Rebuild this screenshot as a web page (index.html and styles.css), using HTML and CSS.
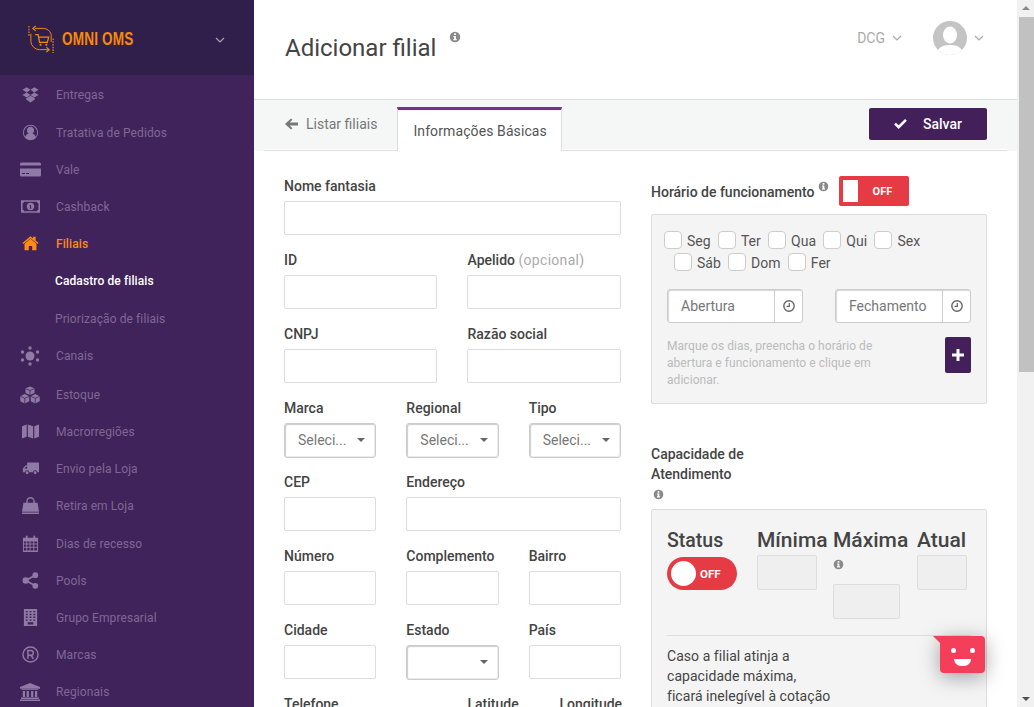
FILE: index.html
```html
<!DOCTYPE html>
<html lang="en">
<head>
    <meta charset="UTF-8">
    <meta name="viewport" content="width=device-width, initial-scale=1.0">
    <title>Adicionar filial</title>
    <link rel="stylesheet" href="styles.css">
</head>
<body>
    <svg class="sprite" aria-hidden="true">
        <symbol id="i-info" viewBox="0 0 16 16"><path fill-rule="evenodd" d="M8 1a7 7 0 1 1 0 14A7 7 0 0 1 8 1zM6.800 3v2.300h2.400V3zM5.800 6.500v1.400h1v2.800h-1v1.500h4.400v-1.500h-1V6.500z"/></symbol>
        <symbol id="i-chev" viewBox="0 0 10 6"><path d="M1 1l4 4 4-4" fill="none" stroke="currentColor" stroke-width="1.200"/></symbol>
        <symbol id="i-clock" viewBox="0 0 14 14"><circle cx="7" cy="7" r="5.200" fill="none" stroke="currentColor" stroke-width="1.400"/><path d="M7.300 4v3.400H4.600" fill="none" stroke="currentColor" stroke-width="1.200"/></symbol>
    </svg>

    <div class="app">
        <!-- Sidebar -->
        <nav class="sidebar">
            <div class="brand">
                <svg class="brand-logo" viewBox="0 0 28 30" fill="none" stroke="#f58a07">
                    <path d="M1 1v11M26 14v15" stroke-dasharray="1.600 1.200" stroke-width="1.200"/>
                    <path d="M7 3.500h9a9 9 0 0 1 8 6v8" stroke-width="1"/>
                    <path d="M3 9v8a9 9 0 0 0 9 8.500h9" stroke-width="1"/>
                    <path d="M8 1L5 3.500 8 6M19 23l3 2.500-3 2.500" stroke-width="1.200"/>
                    <path d="M7.500 10h3l1.500 8h8l1.500-5.500H11" stroke-width="1.300"/>
                    <circle cx="13" cy="20.500" r="1.100" fill="#f58a07" stroke="none"/>
                    <circle cx="19" cy="20.500" r="1.100" fill="#f58a07" stroke="none"/>
                </svg>
                <span class="brand-name">OMNI OMS</span>
                <svg class="brand-chev"><use href="#i-chev"/></svg>
            </div>
            <ul class="menu">
                <li class="menu-item">
                    <svg class="menu-icon" viewBox="0 0 20 20"><path d="M5.500 1.500L10 4.500 5.500 7.500 .5 4.500zM14.500 1.500l5 3-5 3L10 4.500zM5.500 7.500L10 10.500l-4.500 3-5-3zM14.500 7.500l5 3-5 3L10 10.500zM5 14.500l5-3 5 3v1.500l-5 3.500-5-3.500z"/></svg>
                    Entregas
                </li>
                <li class="menu-item">
                    <svg class="menu-icon" viewBox="0 0 20 20"><path fill-rule="evenodd" d="M10 1a9 9 0 1 1 0 18 9 9 0 0 1 0-18zm0 1.200a7.800 7.800 0 0 0-6 12.700c.7-2.200 2.200-3.500 3.800-3.800a4.200 4.200 0 1 1 4.400 0c1.600.3 3.100 1.600 3.800 3.800A7.800 7.800 0 0 0 10 2.200z"/></svg>
                    Tratativa de Pedidos
                </li>
                <li class="menu-item">
                    <svg class="menu-icon menu-icon--wide" viewBox="0 0 21 14"><path d="M0 1.500A1.500 1.500 0 0 1 1.500 0h18A1.500 1.500 0 0 1 21 1.500V3H0zM0 6h21v6.500a1.500 1.500 0 0 1-1.500 1.500h-18A1.500 1.500 0 0 1 0 12.500zM2 10.500v1h3v-1zm4 0v1h3v-1z" fill-rule="evenodd"/></svg>
                    Vale
                </li>
                <li class="menu-item">
                    <svg class="menu-icon menu-icon--cash" viewBox="0 0 18 12"><path fill-rule="evenodd" d="M0 0h18v12H0zM3 1.500A2 2 0 0 1 1.500 3v6A2 2 0 0 1 3 10.500h12A2 2 0 0 1 16.500 9V3A2 2 0 0 1 15 1.500zM9 2.500a3.500 3.500 0 1 1 0 7 3.500 3.500 0 0 1 0-7zM8 4.500v.7h.6v2H8v.8h2.100v-.8h-.6V4.500z"/></svg>
                    Cashback
                </li>
                <li class="menu-item menu-item--active">
                    <svg class="menu-icon" viewBox="0 0 20 18"><path d="M10 3.500l7 5.800V16a1 1 0 0 1-1 1h-4v-5H8v5H4a1 1 0 0 1-1-1V9.300zM10 .5l3 2.500V1h3v4.500l3.500 3-1 1.200L10 2.700 1.500 9.700l-1-1.200z"/></svg>
                    Filiais
                </li>
                <li class="menu-item menu-item--sub menu-item--current">Cadastro de filiais</li>
                <li class="menu-item menu-item--sub">Priorização de filiais</li>
                <li class="menu-item">
                    <svg class="menu-icon menu-icon--lg" viewBox="0 0 20 20"><circle cx="10" cy="10" r="4.500"/><circle cx="10" cy="2" r="1.700"/><circle cx="10" cy="18" r="1.700"/><circle cx="2.500" cy="6" r="1.700"/><circle cx="17.500" cy="6" r="1.700"/><circle cx="2.500" cy="14" r="1.700"/><circle cx="17.500" cy="14" r="1.700"/></svg>
                    Canais
                </li>
                <li class="menu-item menu-item--gap">
                    <svg class="menu-icon menu-icon--lg" viewBox="0 0 21 18"><path d="M10.500 0l4.700 2v5L10.500 9 5.800 7V2zM5 8l4.700 2.200v5.300L5 18 .3 15.500v-5.300zM16 8l4.700 2.200v5.300L16 18l-4.700-2.500v-5.300z"/><path d="M6 2.300l4.500 2 4.500-2M10.500 4.300V9M.6 10.500l4.400 2 4.400-2M5 12.500V18M11.600 10.500l4.400 2 4.400-2M16 12.500V18" fill="none" stroke="#40235a" stroke-width=".8"/></svg>
                    Estoque
                </li>
                <li class="menu-item">
                    <svg class="menu-icon" viewBox="0 0 18 18"><path d="M0 3.500L5 1.500v13L0 16.500zM6.200 1.500l5.600 2v13l-5.600-2zM13 3.500l5-2v13l-5 2z"/></svg>
                    Macrorregiões
                </li>
                <li class="menu-item">
                    <svg class="menu-icon" viewBox="0 0 20 16"><path fill-rule="evenodd" d="M6 1h13a1 1 0 0 1 1 1v10.500h-2a2.500 2.500 0 0 0-5 0H8.500a2.500 2.500 0 0 0-5 0H1V8l3-3.500h2zM2.800 8H6V5.800H4.700z"/><circle cx="6" cy="13" r="1.700"/><circle cx="15.500" cy="13" r="1.700"/></svg>
                    Envio pela Loja
                </li>
                <li class="menu-item">
                    <svg class="menu-icon" viewBox="0 0 18 18"><path fill-rule="evenodd" d="M1.500 6h3V4.500a4.500 4.500 0 0 1 9 0V6h3L18 15.500H0zM6 6h6V4.500a3 3 0 0 0-6 0zM0 16.300h18V18H0z"/></svg>
                    Retira em Loja
                </li>
                <li class="menu-item">
                    <svg class="menu-icon" viewBox="0 0 16 18"><path fill-rule="evenodd" d="M0 3h3V1.500a1 1 0 0 1 2 0V3h6V1.500a1 1 0 0 1 2 0V3h3v15H0zM1 7v2h2.500V7zm3.500 0v2H7V7zM8 7v2h3V7zm4 0v2h3V7zM1 10v2.500h2.500V10zm3.500 0v2.500H7V10zM8 10v2.500h3V10zm4 0v2.500h3V10zM1 13.500V16.500h2.500v-3zm3.500 0v3H7v-3zm3.500 0v3h3v-3zm4 0v3h3v-3z"/></svg>
                    Dias de recesso
                </li>
                <li class="menu-item">
                    <svg class="menu-icon" viewBox="0 0 16 16"><circle cx="3.500" cy="8" r="3"/><circle cx="12.500" cy="3" r="2.700"/><circle cx="12.500" cy="13" r="2.700"/><path d="M3.500 8l9-5M3.500 8l9 5" stroke="#8e7aa5" stroke-width="1.500"/></svg>
                    Pools
                </li>
                <li class="menu-item">
                    <svg class="menu-icon" viewBox="0 0 14 18"><path fill-rule="evenodd" d="M0 0h14v18H0zM2 2v1.500h2V2zm4 0v1.500h2V2zm4 0v1.500h2V2zM2 5v1.500h2V5zm4 0v1.500h2V5zm4 0v1.500h2V5zM2 8v1.500h2V8zm4 0v1.500h2V8zm4 0v1.500h2V8zM2 11v1.500h2V11zm4 0v1.500h2V11zm4 0v1.500h2V11zM4 14v2.500h6V14z"/></svg>
                    Grupo Empresarial
                </li>
                <li class="menu-item">
                    <svg class="menu-icon" viewBox="0 0 18 18">
                        <circle cx="9" cy="9" r="8" fill="none" stroke="#8e7aa5" stroke-width="1.500"/>
                        <path d="M6.300 13.500V4.800h3.200a2.500 2.500 0 0 1 0 5H6.300M9.500 9.800l2.500 3.700" fill="none" stroke="#8e7aa5" stroke-width="1.600"/>
                    </svg>
                    Marcas
                </li>
                <li class="menu-item">
                    <svg class="menu-icon menu-icon--lg" viewBox="0 0 18 16"><path d="M9 0l9 3.500v1.500H0V3.500zM1.500 5.500h15v.8h-15zM2.500 7h2v5.500h-2zM6 7h2v5.500H6zM10 7h2v5.500h-2zM13.500 7h2v5.500h-2zM1 13h16v1.200H1zM0 14.700h18V16H0z"/></svg>
                    Regionais
                </li>
            </ul>
        </nav>

        <!-- Main -->
        <main class="main">
            <header class="topbar">
                <h1 class="page-title">Adicionar filial</h1>
                <svg class="info info--title"><use href="#i-info"/></svg>
                <div class="topbar-right">
                    <span class="account">DCG</span>
                    <svg class="chev"><use href="#i-chev"/></svg>
                    <svg class="avatar" viewBox="0 0 34 34">
                        <defs><clipPath id="avatar-clip"><circle cx="17" cy="17" r="17"/></clipPath></defs>
                        <circle cx="17" cy="17" r="17" fill="#c4c4c4"/>
                        <g clip-path="url(#avatar-clip)" fill="#fff">
                            <ellipse cx="17" cy="14" rx="7" ry="8.500"/>
                            <path d="M4 34c0-7 5-10 13-10s13 3 13 10z"/>
                        </g>
                    </svg>
                    <svg class="chev chev--user"><use href="#i-chev"/></svg>
                </div>
            </header>

            <div class="tabs">
                <div class="tab-back">
                    <svg class="tab-arrow" viewBox="0 0 14 12"><path d="M6.500 0L8 1.500 5 4.500h9v3H5l3 3L6.500 12 0 6z"/></svg>
                    Listar filiais
                </div>
                <div class="tab-active">Informações Básicas</div>
                <button class="btn-save">
                    <svg class="btn-check" viewBox="0 0 14 11"><path d="M0 6l2-2 3 3 7-7 2 2-9 9z"/></svg>
                    Salvar
                </button>
            </div>

            <div class="content">
                <!-- Left form -->
                <form class="form-grid">
                    <div class="field span-6"><label>Nome fantasia</label><input type="text"></div>
                    <div class="field span-3"><label>ID</label><input type="text"></div>
                    <div class="field span-3"><label>Apelido <span class="optional">(opcional)</span></label><input type="text"></div>
                    <div class="field span-3"><label>CNPJ</label><input type="text"></div>
                    <div class="field span-3"><label>Razão social</label><input type="text"></div>
                    <div class="field span-2"><label>Marca</label><div class="select">Seleci...</div></div>
                    <div class="field span-2"><label>Regional</label><div class="select">Seleci...</div></div>
                    <div class="field span-2"><label>Tipo</label><div class="select">Seleci...</div></div>
                    <div class="field span-2"><label>CEP</label><input type="text"></div>
                    <div class="field span-4"><label>Endereço</label><input type="text"></div>
                    <div class="field span-2"><label>Número</label><input type="text"></div>
                    <div class="field span-2"><label>Complemento</label><input type="text"></div>
                    <div class="field span-2"><label>Bairro</label><input type="text"></div>
                    <div class="field span-2"><label>Cidade</label><input type="text"></div>
                    <div class="field span-2"><label>Estado</label><div class="select"></div></div>
                    <div class="field span-2"><label>País</label><input type="text"></div>
                    <div class="field span-3"><label>Telefone</label><input type="text"></div>
                    <div class="field span-3 geo">
                        <div class="field"><label>Latitude</label><input type="text"></div>
                        <div class="field"><label>Longitude</label><input type="text"></div>
                    </div>
                </form>

                <!-- Right column -->
                <section class="side">
                    <div class="hours-head">
                        <span class="side-title">Horário de funcionamento</span>
                        <svg class="info info--side"><use href="#i-info"/></svg>
                        <div class="switch-square"><span class="switch-knob"></span>OFF</div>
                    </div>
                    <div class="panel panel--hours">
                        <div class="days">
                            <label class="day"><span class="check"></span><span class="day-name">Seg</span></label>
                            <label class="day"><span class="check"></span><span class="day-name">Ter</span></label>
                            <label class="day"><span class="check"></span><span class="day-name">Qua</span></label>
                            <label class="day"><span class="check"></span><span class="day-name">Qui</span></label>
                            <label class="day"><span class="check"></span><span class="day-name">Sex</span></label>
                        </div>
                        <div class="days days--second">
                            <label class="day"><span class="check"></span><span class="day-name">Sáb</span></label>
                            <label class="day"><span class="check"></span><span class="day-name">Dom</span></label>
                            <label class="day"><span class="check"></span><span class="day-name">Fer</span></label>
                        </div>
                        <div class="times">
                            <div class="time-input"><span class="time-text">Abertura</span><span class="time-addon"><svg class="clock"><use href="#i-clock"/></svg></span></div>
                            <div class="time-input"><span class="time-text">Fechamento</span><span class="time-addon"><svg class="clock"><use href="#i-clock"/></svg></span></div>
                        </div>
                        <div class="hours-foot">
                            <p class="hint">Marque os dias, preencha o horário de abertura e funcionamento e clique em adicionar.</p>
                            <button class="btn-add" type="button">
                                <svg class="plus" viewBox="0 0 12 12"><path d="M4.500 0h3v4.500H12v3H7.500V12h-3V7.500H0v-3h4.500z"/></svg>
                            </button>
                        </div>
                    </div>

                    <div class="capacity-head">
                        <span class="side-title">Capacidade de Atendimento</span>
                        <svg class="info info--cap"><use href="#i-info"/></svg>
                    </div>
                    <div class="panel panel--capacity">
                        <div class="cap-grid">
                            <div>
                                <h3 class="cap-title cap-title--status">Status</h3>
                                <div class="switch-round"><span class="switch-dot"></span>OFF</div>
                            </div>
                            <div>
                                <h3 class="cap-title">Mínima</h3>
                                <input class="cap-input cap-input--min" type="text">
                            </div>
                            <div>
                                <h3 class="cap-title">Máxima</h3>
                                <svg class="info info--max"><use href="#i-info"/></svg>
                                <input class="cap-input cap-input--max" type="text">
                            </div>
                            <div>
                                <h3 class="cap-title">Atual</h3>
                                <input class="cap-input cap-input--cur" type="text">
                            </div>
                        </div>
                        <hr class="cap-line">
                        <p class="cap-text">Caso a filial atinja a capacidade máxima, ficará inelegível à cotação</p>
                    </div>
                </section>
            </div>

            <!-- Chat widget -->
            <div class="chat">
                <span class="chat-eye chat-eye--left"></span>
                <span class="chat-eye chat-eye--right"></span>
                <span class="chat-smile"></span>
            </div>
        </main>

        <!-- Scrollbar -->
        <div class="scrollbar">
            <span class="scroll-up"></span>
            <span class="scroll-thumb"></span>
            <span class="scroll-down"></span>
        </div>
    </div>
</body>
</html>
```

FILE: styles.css
```css
* {
    box-sizing: border-box;
}

html, body {
    height: 100%;
    margin: 0;
    overflow: hidden;
}

body {
    font-family: Roboto, "Liberation Sans", sans-serif;
    font-size: 14px;
    color: #444;
    background-color: #fff;
}

.sprite {
    display: none;
}

.app {
    display: flex;
    height: 707px;
}

/* Sidebar */
.sidebar {
    width: 254px;
    flex: none;
    background-color: #40235a;
    overflow: hidden;
}

.brand {
    display: flex;
    align-items: center;
    height: 75px;
    padding: 4px 0 0 28px;
    background-color: #311f4b;
}

.brand-logo {
    width: 27px;
    height: 29px;
    margin-right: 7px;
}

.brand-name {
    font-family: "Liberation Sans", sans-serif;
    font-size: 18px;
    font-weight: 700;
    letter-spacing: .2px;
    color: #f58a07;
    transform: scaleX(.755);
    transform-origin: left center;
}

.brand-chev {
    width: 10px;
    height: 6px;
    margin-left: 58px;
    color: #a9a0b8;
}

.menu {
    list-style: none;
    margin: 0;
    padding: 1.800px 0 0;
}

.menu-item {
    display: flex;
    align-items: center;
    height: 37.200px;
    padding-left: 56px;
    position: relative;
    font-size: 12px;
    letter-spacing: .1px;
    color: #7f6896;
}

.menu-item--gap {
    margin-top: 2px;
}

.menu-item--active {
    color: #ff8a14;
    font-weight: 500;
}

.menu-item--current {
    color: #fff;
    font-weight: 500;
}

.menu-item--sub {
    padding-left: 55px;
}

.menu-icon {
    position: absolute;
    left: 22px;
    top: 50%;
    width: 17px;
    height: 17px;
    margin-top: -9px;
    fill: #8e7aa5;
}

.menu-icon--wide {
    left: 20px;
    width: 21px;
}

.menu-icon--cash {
    left: 21px;
    width: 19px;
}

.menu-icon--lg {
    left: 20px;
    width: 20px;
    height: 20px;
    margin-top: -10px;
}

.menu-item--active .menu-icon {
    fill: #ff8a14;
}

/* Main */
.main {
    flex: 1;
    min-width: 0;
    position: relative;
    overflow: hidden;
}

.topbar {
    display: flex;
    height: 100px;
    padding: 31px 30px 0 31px;
    border-bottom: 1px solid #ddd;
}

.page-title {
    margin: 0;
    font-size: 24px;
    font-weight: 400;
    line-height: 34px;
    color: #444;
}

.info {
    display: block;
    fill: #8a8a8a;
    width: 12px;
    height: 12px;
}

.info--title {
    margin: 0 0 0 13px;
}

.topbar-right {
    display: flex;
    align-items: center;
    height: 34px;
    margin: -10px 0 0 auto;
}

.account {
    color: #aaa;
    font-size: 14px;
}

.chev {
    width: 10px;
    height: 6px;
    margin-left: 7px;
    color: #aaa;
}

.chev--user {
    margin-left: 7px;
    margin-right: 3px;
}

.avatar {
    width: 34px;
    height: 34px;
    margin-left: 31px;
}

.tabs {
    display: flex;
    align-items: flex-start;
    height: 51px;
    padding: 7px 30px 0 31px;
    background-color: #f5f7f7;
    position: relative;
}

.tabs::after {
    content: "";
    position: absolute;
    left: 10px;
    right: 10px;
    bottom: 0;
    height: 2px;
    background: linear-gradient(#fff 0 1px, #ddd 1px);
}

.tab-back {
    display: flex;
    align-items: center;
    height: 34px;
    color: #777;
}

.tab-arrow {
    width: 13px;
    height: 12px;
    margin-right: 8px;
    fill: #777;
}

.tab-active {
    position: relative;
    z-index: 1;
    height: 44px;
    margin-left: 20px;
    padding: 13px 14px 0 15px;
    border: 1px solid #ddd;
    border-top: 3px solid #7b2d8e;
    border-bottom: 0;
    background-color: #fff;
    letter-spacing: .1px;
    color: #555;
}

.btn-save {
    display: flex;
    align-items: center;
    width: 118px;
    height: 32px;
    margin: 1px 0 0 auto;
    padding: 0 0 0 25px;
    border: none;
    border-radius: 2px;
    background-color: #432059;
    color: #fff;
    font: 500 14px Roboto, sans-serif;
}

.btn-check {
    width: 13px;
    height: 10px;
    margin-right: 16px;
    fill: #fff;
}

.content {
    display: flex;
    gap: 30px;
    padding: 25px 30px 0;
}

/* Left form */
.form-grid {
    width: 337px;
    flex: none;
    display: grid;
    grid-template-columns: repeat(6, 1fr);
    column-gap: 30px;
    row-gap: 15px;
    align-content: start;
}

.span-2 { grid-column: span 2; }
.span-3 { grid-column: span 3; }
.span-4 { grid-column: span 4; }
.span-6 { grid-column: span 6; }

.field label {
    display: block;
    height: 20px;
    margin-bottom: 5px;
    font-weight: 500;
    line-height: 20px;
    white-space: nowrap;
    color: #444;
}

.optional {
    font-weight: 400;
    letter-spacing: .3px;
    color: #aaa;
}

.field input {
    display: block;
    width: 100%;
    height: 34px;
    border: 1px solid #ddd;
    border-radius: 2px;
    background-color: #fff;
}

.select {
    position: relative;
    height: 35px;
    margin-bottom: -1px;
    padding: 0 0 0 13px;
    border: 1px solid #ccc;
    border-radius: 3px;
    box-shadow: inset 1px 1px 1px rgba(0, 0, 0, .2), inset -1px -1px 0 rgba(0, 0, 0, .08);
    line-height: 33px;
    color: #777;
}

.select::after {
    content: "";
    position: absolute;
    right: 10px;
    top: 14px;
    border-style: solid;
    border-width: 4px 4.500px 0;
    border-color: #666 transparent transparent;
}

.geo {
    display: grid;
    grid-template-columns: 62px 62px;
    column-gap: 30px;
}

/* Right column */
.side {
    width: 336px;
    flex: none;
}

.hours-head {
    display: flex;
    height: 30px;
    align-items: center;
    margin-bottom: 8px;
}

.side-title {
    font-weight: 500;
    line-height: 20px;
    color: #444;
}

.hours-head .side-title {
    margin-top: 1px;
}

.info--side {
    width: 11px;
    height: 11px;
    margin: -9px 0 0 3px;
}

.switch-square {
    display: flex;
    align-items: center;
    width: 70px;
    height: 30px;
    margin-left: 10px;
    padding: 0 4px;
    border-radius: 2px;
    background-color: #e63b45;
    color: #fff;
    font-size: 11px;
    font-weight: 700;
}

.switch-knob {
    width: 15px;
    height: 22px;
    margin-right: 15px;
    background-color: #fff;
}

.panel {
    border: 1px solid #ddd;
    border-radius: 2px;
    background-color: #f4f4f4;
}

.panel--hours {
    height: 190px;
    padding: 16px 15px 0;
}

.days {
    display: flex;
    gap: 7.300px;
    margin-left: -3px;
}

.days--second {
    margin: 4px 0 0 7px;
}

.day {
    display: flex;
    align-items: center;
    height: 18px;
    color: #555;
}

.day-name {
    margin-top: 2px;
}

.check {
    width: 18px;
    height: 18px;
    margin-right: 5px;
    border: 1px solid #ccc;
    border-radius: 4px;
    background-color: #fff;
}

.times {
    display: flex;
    justify-content: space-between;
    margin-top: 18px;
}

.time-input {
    display: flex;
    width: 136px;
    height: 34px;
    border: 1px solid #ccc;
    border-radius: 3px;
    background-color: #fff;
    box-shadow: inset 1px 1px 1px rgba(0, 0, 0, .16);
}

.time-text {
    flex: 1;
    padding-left: 13px;
    line-height: 32px;
    color: #777;
}

.time-addon {
    display: flex;
    align-items: center;
    justify-content: center;
    width: 28px;
    border-left: 1px solid #ccc;
}

.clock {
    width: 14px;
    height: 14px;
    color: #666;
}

.hours-foot {
    display: flex;
    justify-content: space-between;
    margin-top: 14px;
}

.hint {
    width: 230px;
    margin: 1px 0 0;
    font-size: 12px;
    line-height: 17px;
    letter-spacing: .05px;
    color: #bbb;
}

.btn-add {
    display: flex;
    align-items: center;
    justify-content: center;
    width: 26px;
    height: 36px;
    padding: 0;
    border: none;
    border-radius: 2px;
    background-color: #432059;
}

.plus {
    width: 12px;
    height: 12px;
    fill: #fff;
}

.capacity-head {
    width: 110px;
    margin-top: 40px;
    height: 65px;
}

.info--cap {
    margin: 5px 0 0 2px;
    width: 11px;
    height: 11px;
}

.panel--capacity {
    height: 300px;
    padding: 19px 15px 0;
}

.cap-grid {
    display: grid;
    grid-template-columns: 90px 76px 84px 50px;
    height: 106px;
}

.cap-title {
    margin: 0 0 4px;
    font-size: 21px;
    font-weight: 500;
    line-height: 22px;
    white-space: nowrap;
    color: #444;
}

.cap-title--status {
    margin-bottom: 2px;
    font-size: 19.500px;
    line-height: 24px;
}

.cap-input {
    display: block;
    height: 35px;
    border: 1px solid #ddd;
    border-radius: 2px;
    background-color: #efefef;
}

.cap-input--min { width: 60px; }
.cap-input--max { width: 67px; margin-top: 14px; }
.cap-input--cur { width: 50px; }

.info--max {
    width: 11px;
    height: 11px;
    margin: 8px 0 0 0;
}

.switch-round {
    display: flex;
    align-items: center;
    width: 70px;
    height: 33px;
    margin-top: 4px;
    padding-left: 4px;
    border-radius: 17px;
    background-color: #e63b45;
    color: #fff;
    font-size: 11.500px;
    font-weight: 700;
}

.switch-dot {
    width: 25px;
    height: 25px;
    margin-right: 4px;
    border-radius: 50%;
    background-color: #fff;
}

.cap-line {
    margin: 0 0 10px;
    border: none;
    border-top: 1px solid #ddd;
}

.cap-text {
    width: 168px;
    margin: 0;
    font-size: 14px;
    line-height: 20px;
    letter-spacing: .05px;
    color: #444;
}

/* Chat widget */
.chat {
    position: absolute;
    left: 686px;
    top: 636px;
    width: 45px;
    height: 37px;
    border-radius: 0 4px 4px 4px;
    background-color: #f53e59;
    box-shadow: 0 4px 20px rgba(0, 0, 0, .35);
}

.chat::before {
    content: "";
    position: absolute;
    left: -7px;
    top: 0;
    border-top: 7px solid #f53e59;
    border-left: 7px solid transparent;
}

.chat-eye {
    position: absolute;
    top: 12px;
    width: 5px;
    height: 5px;
    border-radius: 50%;
    background-color: #fff;
}

.chat-eye--left { left: 11px; }
.chat-eye--right { left: 30px; }

.chat-smile {
    position: absolute;
    left: 14px;
    top: 23px;
    width: 17px;
    height: 7px;
    border-radius: 0 0 9px 9px;
    background-color: #fff;
}

/* Scrollbar */
.scrollbar {
    position: relative;
    width: 17px;
    flex: none;
    background-color: #f1f1f1;
}

.scroll-thumb {
    position: absolute;
    left: 2px;
    right: 0;
    top: 17px;
    height: 355px;
    background-color: #c1c1c1;
}

.scroll-up,
.scroll-down {
    position: absolute;
    left: 5px;
    border-style: solid;
    border-color: transparent;
}

.scroll-up {
    top: 6px;
    border-width: 0 4px 4px;
    border-bottom-color: #8a8a8a;
}

.scroll-down {
    bottom: 6px;
    border-width: 4px 4px 0;
    border-top-color: #505050;
}
```
